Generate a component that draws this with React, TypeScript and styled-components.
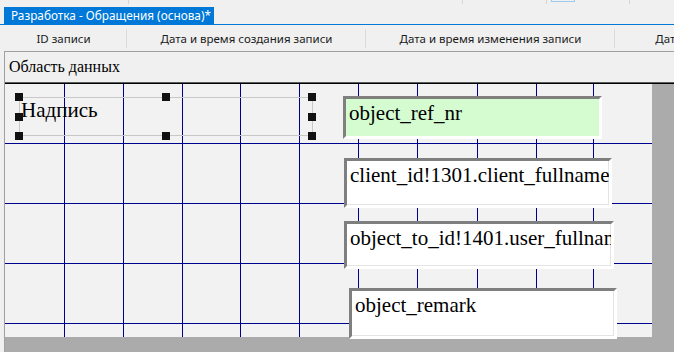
import React from 'react';
import styled, { createGlobalStyle } from 'styled-components';

const GlobalStyle = createGlobalStyle`
  html, body {
    margin: 0;
    padding: 0;
    background: #f0f0f0;
    overflow: hidden;
  }
`;

const uiFont = `'Noto Sans', 'Liberation Sans', sans-serif`;
const formFont = `'Liberation Serif', 'Times New Roman', serif`;

const Window = styled.div`
  width: 674px;
  height: 352px;
  display: flex;
  flex-direction: column;
  overflow: hidden;
  background: #f0f0f0;
  font-family: ${uiFont};
`;

const TopStrip = styled.div`
  height: 7px;
  display: flex;
  align-items: flex-start;
  flex-shrink: 0;
`;

const StripSegment = styled.div<{ $w: number }>`
  width: ${({ $w }) => $w}px;
  height: 4px;
  border-right: 1px solid #d6d6d6;
  flex-shrink: 0;
`;

const StripButton = styled.div`
  width: 22px;
  height: 1px;
  margin-left: 4px;
  border: 1px solid #9ecbf0;
  border-top: none;
  flex-shrink: 0;
`;

const TabBar = styled.div`
  height: 17px;
  padding-left: 4px;
  display: flex;
  border-bottom: 1px solid #0078d7;
  flex-shrink: 0;
`;

const Tab = styled.div`
  background: #0078d7;
  color: #fff;
  font-size: 11.8px;
  line-height: 17px;
  padding: 0 3px 0 7px;
  white-space: nowrap;
`;

const HeaderRow = styled.div`
  height: 26px;
  display: flex;
  flex-shrink: 0;
  white-space: nowrap;
`;

const HeaderCell = styled.div<{ $w: number; $last?: boolean }>`
  position: relative;
  width: ${({ $w }) => $w}px;
  flex-shrink: 0;
  display: flex;
  align-items: center;
  justify-content: center;
  font-size: 11.5px;
  color: #1a1a1a;

  &::after {
    content: '';
    display: ${({ $last }) => ($last ? 'none' : 'block')};
    position: absolute;
    right: 0;
    top: 4px;
    bottom: 3px;
    width: 1px;
    background: #dcdcdc;
  }
`;

const Designer = styled.div`
  flex: 1;
  margin-left: 4px;
  border-left: 1px solid #a0a0a0;
  border-top: 1px solid #a0a0a0;
  display: flex;
  flex-direction: column;
  min-height: 0;
`;

const SectionHeader = styled.div`
  height: 30px;
  padding-left: 4px;
  display: flex;
  align-items: center;
  font-family: ${formFont};
  font-size: 16px;
  color: #000;
  border-bottom: 1px solid #5c5c5c;
  flex-shrink: 0;
`;

const Body = styled.div`
  flex: 1;
  border-top: 1px solid #000;
  background: #ababab;
  min-height: 0;
`;

const Canvas = styled.div`
  position: relative;
  width: 647px;
  height: 253px;
  background: #f2f2f2;
`;

const GridLayer = styled.svg`
  position: absolute;
  left: 0;
  top: 0;
  width: 647px;
  height: 253px;
`;

const Label = styled.div`
  position: absolute;
  left: 14px;
  top: 13px;
  width: 291px;
  height: 37px;
  border: 1px solid #c8c8c8;
  font-family: ${formFont};
  font-size: 21px;
  line-height: 24px;
  padding-left: 1px;
  box-sizing: content-box;
  color: #000;
`;

const Handle = styled.div<{ $x: number; $y: number }>`
  position: absolute;
  left: ${({ $x }) => $x}px;
  top: ${({ $y }) => $y}px;
  width: 8px;
  height: 8px;
  background: #111;
`;

const Field = styled.div<{ $x: number; $y: number; $w: number; $h: number; $bound?: boolean }>`
  position: absolute;
  left: ${({ $x }) => $x}px;
  top: ${({ $y }) => $y}px;
  width: ${({ $w }) => $w}px;
  height: ${({ $h }) => $h}px;
  box-sizing: border-box;
  border: 3px solid;
  border-color: #7f7f7f #fff #fff #7f7f7f;
  box-shadow: inset -1px -1px 0 ${({ $bound }) => ($bound ? '#d4fcd0' : '#e4e4e4')};
  background: ${({ $bound }) => ($bound ? '#d4fcd0' : '#fff')};
  padding: 2px 0 0 3px;
  font-family: ${formFont};
  font-size: 21px;
  line-height: 24px;
  color: #000;
  white-space: nowrap;
  overflow: hidden;
`;

const columns = [
  { title: 'ID записи', width: 127 },
  { title: 'Дата и время создания записи', width: 239 },
  { title: 'Дата и время изменения записи', width: 249 },
  { title: 'Дата и время удаления записи', width: 253 },
];

const gridX = [59, 118, 177, 235, 294, 353, 412, 472, 531, 588];
const gridY = [59, 119, 179, 239];

const handles = [
  [10, 9], [157, 9], [303, 9],
  [10, 29], [303, 29],
  [10, 48], [157, 48], [303, 48],
];

const fields = [
  { text: 'object_ref_nr', x: 338, y: 12, w: 259, h: 43, bound: true },
  { text: 'client_id!1301.client_fullname', x: 339, y: 74, w: 268, h: 50 },
  { text: 'object_to_id!1401.user_fullname', x: 339, y: 137, w: 270, h: 48 },
  { text: 'object_remark', x: 344, y: 204, w: 268, h: 51 },
];

export default function App() {
  return (
    <>
      <GlobalStyle />
      <Window>
        <TopStrip>
          <StripSegment $w={128} />
          <StripSegment $w={333} />
          <StripSegment $w={83} />
          <StripButton />
          <StripSegment $w={54} />
        </TopStrip>

        <TabBar>
          <Tab>Разработка - Обращения (основа)*</Tab>
        </TabBar>

        <HeaderRow>
          {columns.map((col, i) => (
            <HeaderCell key={col.title} $w={col.width} $last={i === columns.length - 1}>
              {col.title}
            </HeaderCell>
          ))}
        </HeaderRow>

        <Designer>
          <SectionHeader>Область данных</SectionHeader>
          <Body>
            <Canvas>
              <GridLayer viewBox="0 0 647 253" shapeRendering="crispEdges">
                {gridX.map((x) => (
                  <line key={`v${x}`} x1={x + 0.5} y1={0} x2={x + 0.5} y2={253} stroke="#00008f" strokeWidth={1} />
                ))}
                {gridY.map((y) => (
                  <line key={`h${y}`} x1={0} y1={y + 0.5} x2={647} y2={y + 0.5} stroke="#00008f" strokeWidth={1} />
                ))}
              </GridLayer>

              <Label>Надпись</Label>
              {handles.map(([x, y]) => (
                <Handle key={`${x}-${y}`} $x={x} $y={y} />
              ))}

              {fields.map((f) => (
                <Field key={f.text} $x={f.x} $y={f.y} $w={f.w} $h={f.h} $bound={f.bound}>
                  {f.text}
                </Field>
              ))}
            </Canvas>
          </Body>
        </Designer>
      </Window>
    </>
  );
}
